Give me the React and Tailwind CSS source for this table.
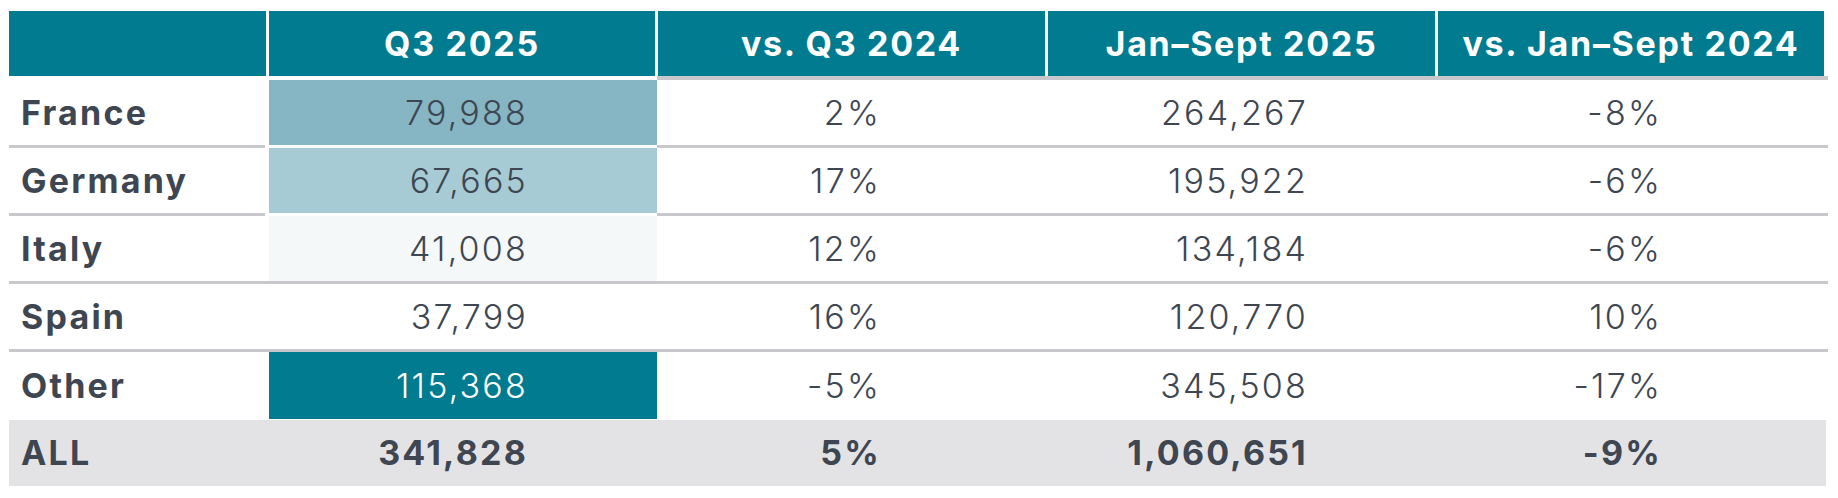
const rows = [
  { name: 'France', q3: '79,988', vsQ3: '2%', ytd: '264,267', vsYtd: '-8%', fill: 'bg-[#86b5c3]', line: 'white' },
  { name: 'Germany', q3: '67,665', vsQ3: '17%', ytd: '195,922', vsYtd: '-6%', fill: 'bg-[#a7cbd4]', line: 'white' },
  { name: 'Italy', q3: '41,008', vsQ3: '12%', ytd: '134,184', vsYtd: '-6%', fill: 'bg-[#f4f8f9]', line: 'gray' },
  { name: 'Spain', q3: '37,799', vsQ3: '16%', ytd: '120,770', vsYtd: '10%', fill: '', line: 'gray' },
]

const headers = ['Q3 2025', 'vs. Q3 2024', 'Jan–Sept 2025', 'vs. Jan–Sept 2024']

function BodyRow({ row }) {
  const q3Line = row.line === 'white' ? 'border-white' : 'border-[#c8c8cc]'
  return (
    <div className="flex h-[68px] w-[1819px] items-stretch">
      <div className="flex w-[256px] items-center border-b-[3px] border-[#c8c8cc] pl-[12px] font-bold">
        {row.name}
      </div>
      <div className={`w-[4px] border-b-[3px] ${q3Line}`} />
      <div className={`flex w-[388px] items-center justify-end border-b-[3px] ${q3Line} pr-[129px] font-light ${row.fill}`}>
        {row.q3}
      </div>
      <div className="flex w-[388px] items-center justify-end border-b-[3px] border-[#c8c8cc] pr-[164px] font-light">
        {row.vsQ3}
      </div>
      <div className="flex w-[390px] items-center justify-end border-b-[3px] border-[#c8c8cc] pr-[127px] font-light">
        {row.ytd}
      </div>
      <div className="flex flex-1 items-center justify-end border-b-[3px] border-[#c8c8cc] pr-[166px] font-light">
        {row.vsYtd}
      </div>
    </div>
  )
}

export default function App() {
  return (
    <div className="h-[498px] w-[1838px] bg-white pl-[9px] pt-[11px] text-[34px] leading-none tracking-[0.065em] text-[#3e4652] [font-family:Inter,'Liberation_Sans',sans-serif]">
      {/* header */}
      <div className="flex h-[65px] gap-[3px]">
        <div className="w-[257px] bg-[#007b8f]" />
        {headers.map((h, i) => (
          <div
            key={h}
            className={`flex items-center justify-center bg-[#007b8f] text-[34px] font-bold tracking-[0.05em] text-white ${i === 1 || i === 2 ? 'w-[387px]' : 'w-[386px]'}`}
          >
            {h}
          </div>
        ))}
      </div>
      <div className="flex h-[4px] w-[1819px]">
        <div className="w-[648px] bg-white" />
        <div className="flex-1 bg-[#c8c8cc]" />
      </div>

      {rows.map((r) => (
        <BodyRow key={r.name} row={r} />
      ))}

      {/* Other */}
      <div className="flex h-[67px] w-[1819px] items-stretch">
        <div className="flex w-[256px] items-center pl-[12px] font-bold">Other</div>
        <div className="w-[4px]" />
        <div className="flex w-[388px] items-center justify-end bg-[#007b8f] pr-[129px] font-light text-white">115,368</div>
        <div className="flex w-[388px] items-center justify-end pr-[164px] font-light">-5%</div>
        <div className="flex w-[390px] items-center justify-end pr-[127px] font-light">345,508</div>
        <div className="flex flex-1 items-center justify-end pr-[166px] font-light">-17%</div>
      </div>

      {/* ALL */}
      <div className="mt-[1px] flex h-[66px] w-[1817px] items-stretch bg-[#e3e3e5] font-bold">
        <div className="flex w-[256px] items-center pl-[12px]">ALL</div>
        <div className="w-[4px]" />
        <div className="flex w-[388px] items-center justify-end pr-[129px]">341,828</div>
        <div className="flex w-[388px] items-center justify-end pr-[164px]">5%</div>
        <div className="flex w-[390px] items-center justify-end pr-[127px]">1,060,651</div>
        <div className="flex flex-1 items-center justify-end pr-[164px]">-9%</div>
      </div>
    </div>
  )
}
